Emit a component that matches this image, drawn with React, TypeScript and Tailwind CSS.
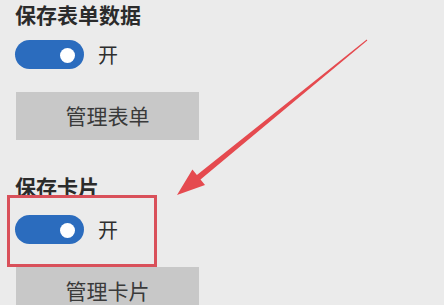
import React from 'react';

const font = { fontFamily: '"Noto Sans CJK SC", "Noto Sans", sans-serif' };

function Toggle() {
  return (
    <div className="flex items-center">
      <div className="relative w-[69px] h-[29px] rounded-full bg-[#2b6cbe]">
        <div className="absolute right-[9px] top-[8px] w-[15px] h-[15px] rounded-full bg-white" />
      </div>
      <span className="ml-[14px] text-[20px] leading-[22px] text-[#2e2e2e]">开</span>
    </div>
  );
}

function Section({ title, button, first }: { title: string; button: string; first?: boolean }) {
  return (
    <div>
      <h2
        className={`${first ? 'mt-[3px]' : 'mt-[35px]'} text-[21px] leading-[22px] font-bold text-[#2b2b2b]`}
      >
        {title}
      </h2>
      <div className={first ? 'mt-[15px]' : 'mt-[18px]'}>
        <Toggle />
      </div>
      <button className="mt-[23px] ml-[1px] w-[183px] h-[48px] bg-[#c8c8c8] text-[21px] text-[#3a3a3a] flex items-center justify-center">
        {button}
      </button>
    </div>
  );
}

export default function App() {
  return (
    <div className="relative w-[444px] h-[305px] overflow-hidden bg-[#ebebeb] pl-[15px]" style={font}>
      <Section title="保存表单数据" button="管理表单" first />
      <Section title="保存卡片" button="管理卡片" />

      {/* annotation: red box */}
      <div className="absolute left-[7px] top-[195px] w-[150px] h-[72px] border-[3px] border-[#d9505a]" />

      {/* annotation: arrow */}
      <svg className="absolute left-0 top-0" width="444" height="305" viewBox="0 0 444 305">
        <polygon
          points="177,195 205,185 200.5,179.5 367.3,40.4 366.7,39.6 196.9,175.1 192.4,169.6"
          fill="#e54a4f"
        />
      </svg>
    </div>
  );
}
